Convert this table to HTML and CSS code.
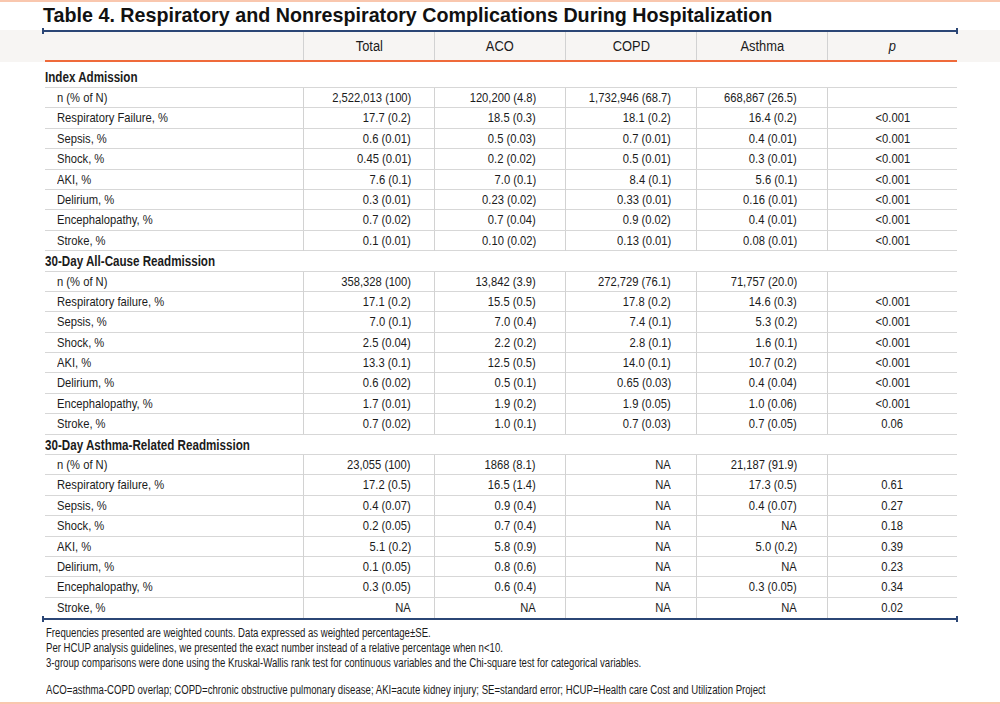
FILE: index.html
```html
<!DOCTYPE html>
<html lang="en">
<head>
<meta charset="utf-8">
<title>Table 4</title>
<link rel="stylesheet" href="styles.css">
</head>
<body>
<div class="page">
  <div class="edge"></div>
  <h1 class="title">Table 4. Respiratory and Nonrespiratory Complications During Hospitalization</h1>
  <div class="band">
    <div class="rule rule-top"></div>
    <div class="hrow">
      <div class="hc hl"></div>
      <div class="hc"><span>Total</span></div>
      <div class="hc"><span>ACO</span></div>
      <div class="hc"><span>COPD</span></div>
      <div class="hc"><span>Asthma</span></div>
      <div class="hc"><span><i>p</i></span></div>
    </div>
  </div>
  <div class="tbody">
    <div class="sec first"><span>Index Admission</span></div>
    <div class="row"><div class="lab"><span>n (% of N)</span></div><div class="c c1"><span>2,522,013 (100)</span></div><div class="c c2"><span>120,200 (4.8)</span></div><div class="c c3"><span>1,732,946 (68.7)</span></div><div class="c c4"><span>668,867 (26.5)</span></div><div class="c p"></div></div>
    <div class="row"><div class="lab"><span>Respiratory Failure, %</span></div><div class="c c1"><span>17.7 (0.2)</span></div><div class="c c2"><span>18.5 (0.3)</span></div><div class="c c3"><span>18.1 (0.2)</span></div><div class="c c4"><span>16.4 (0.2)</span></div><div class="c p"><span>&lt;0.001</span></div></div>
    <div class="row"><div class="lab"><span>Sepsis, %</span></div><div class="c c1"><span>0.6 (0.01)</span></div><div class="c c2"><span>0.5 (0.03)</span></div><div class="c c3"><span>0.7 (0.01)</span></div><div class="c c4"><span>0.4 (0.01)</span></div><div class="c p"><span>&lt;0.001</span></div></div>
    <div class="row"><div class="lab"><span>Shock, %</span></div><div class="c c1"><span>0.45 (0.01)</span></div><div class="c c2"><span>0.2 (0.02)</span></div><div class="c c3"><span>0.5 (0.01)</span></div><div class="c c4"><span>0.3 (0.01)</span></div><div class="c p"><span>&lt;0.001</span></div></div>
    <div class="row"><div class="lab"><span>AKI, %</span></div><div class="c c1"><span>7.6 (0.1)</span></div><div class="c c2"><span>7.0 (0.1)</span></div><div class="c c3"><span>8.4 (0.1)</span></div><div class="c c4"><span>5.6 (0.1)</span></div><div class="c p"><span>&lt;0.001</span></div></div>
    <div class="row"><div class="lab"><span>Delirium, %</span></div><div class="c c1"><span>0.3 (0.01)</span></div><div class="c c2"><span>0.23 (0.02)</span></div><div class="c c3"><span>0.33 (0.01)</span></div><div class="c c4"><span>0.16 (0.01)</span></div><div class="c p"><span>&lt;0.001</span></div></div>
    <div class="row"><div class="lab"><span>Encephalopathy, %</span></div><div class="c c1"><span>0.7 (0.02)</span></div><div class="c c2"><span>0.7 (0.04)</span></div><div class="c c3"><span>0.9 (0.02)</span></div><div class="c c4"><span>0.4 (0.01)</span></div><div class="c p"><span>&lt;0.001</span></div></div>
    <div class="row"><div class="lab"><span>Stroke, %</span></div><div class="c c1"><span>0.1 (0.01)</span></div><div class="c c2"><span>0.10 (0.02)</span></div><div class="c c3"><span>0.13 (0.01)</span></div><div class="c c4"><span>0.08 (0.01)</span></div><div class="c p"><span>&lt;0.001</span></div></div>

    <div class="sec"><span>30-Day All-Cause Readmission</span></div>
    <div class="row"><div class="lab"><span>n (% of N)</span></div><div class="c c1"><span>358,328 (100)</span></div><div class="c c2"><span>13,842 (3.9)</span></div><div class="c c3"><span>272,729 (76.1)</span></div><div class="c c4"><span>71,757 (20.0)</span></div><div class="c p"></div></div>
    <div class="row"><div class="lab"><span>Respiratory failure, %</span></div><div class="c c1"><span>17.1 (0.2)</span></div><div class="c c2"><span>15.5 (0.5)</span></div><div class="c c3"><span>17.8 (0.2)</span></div><div class="c c4"><span>14.6 (0.3)</span></div><div class="c p"><span>&lt;0.001</span></div></div>
    <div class="row"><div class="lab"><span>Sepsis, %</span></div><div class="c c1"><span>7.0 (0.1)</span></div><div class="c c2"><span>7.0 (0.4)</span></div><div class="c c3"><span>7.4 (0.1)</span></div><div class="c c4"><span>5.3 (0.2)</span></div><div class="c p"><span>&lt;0.001</span></div></div>
    <div class="row"><div class="lab"><span>Shock, %</span></div><div class="c c1"><span>2.5 (0.04)</span></div><div class="c c2"><span>2.2 (0.2)</span></div><div class="c c3"><span>2.8 (0.1)</span></div><div class="c c4"><span>1.6 (0.1)</span></div><div class="c p"><span>&lt;0.001</span></div></div>
    <div class="row"><div class="lab"><span>AKI, %</span></div><div class="c c1"><span>13.3 (0.1)</span></div><div class="c c2"><span>12.5 (0.5)</span></div><div class="c c3"><span>14.0 (0.1)</span></div><div class="c c4"><span>10.7 (0.2)</span></div><div class="c p"><span>&lt;0.001</span></div></div>
    <div class="row"><div class="lab"><span>Delirium, %</span></div><div class="c c1"><span>0.6 (0.02)</span></div><div class="c c2"><span>0.5 (0.1)</span></div><div class="c c3"><span>0.65 (0.03)</span></div><div class="c c4"><span>0.4 (0.04)</span></div><div class="c p"><span>&lt;0.001</span></div></div>
    <div class="row"><div class="lab"><span>Encephalopathy, %</span></div><div class="c c1"><span>1.7 (0.01)</span></div><div class="c c2"><span>1.9 (0.2)</span></div><div class="c c3"><span>1.9 (0.05)</span></div><div class="c c4"><span>1.0 (0.06)</span></div><div class="c p"><span>&lt;0.001</span></div></div>
    <div class="row"><div class="lab"><span>Stroke, %</span></div><div class="c c1"><span>0.7 (0.02)</span></div><div class="c c2"><span>1.0 (0.1)</span></div><div class="c c3"><span>0.7 (0.03)</span></div><div class="c c4"><span>0.7 (0.05)</span></div><div class="c p"><span>0.06</span></div></div>

    <div class="sec"><span>30-Day Asthma-Related Readmission</span></div>
    <div class="row"><div class="lab"><span>n (% of N)</span></div><div class="c c1"><span>23,055 (100)</span></div><div class="c c2"><span>1868 (8.1)</span></div><div class="c c3"><span>NA</span></div><div class="c c4"><span>21,187 (91.9)</span></div><div class="c p"></div></div>
    <div class="row"><div class="lab"><span>Respiratory failure, %</span></div><div class="c c1"><span>17.2 (0.5)</span></div><div class="c c2"><span>16.5 (1.4)</span></div><div class="c c3"><span>NA</span></div><div class="c c4"><span>17.3 (0.5)</span></div><div class="c p"><span>0.61</span></div></div>
    <div class="row"><div class="lab"><span>Sepsis, %</span></div><div class="c c1"><span>0.4 (0.07)</span></div><div class="c c2"><span>0.9 (0.4)</span></div><div class="c c3"><span>NA</span></div><div class="c c4"><span>0.4 (0.07)</span></div><div class="c p"><span>0.27</span></div></div>
    <div class="row"><div class="lab"><span>Shock, %</span></div><div class="c c1"><span>0.2 (0.05)</span></div><div class="c c2"><span>0.7 (0.4)</span></div><div class="c c3"><span>NA</span></div><div class="c c4"><span>NA</span></div><div class="c p"><span>0.18</span></div></div>
    <div class="row"><div class="lab"><span>AKI, %</span></div><div class="c c1"><span>5.1 (0.2)</span></div><div class="c c2"><span>5.8 (0.9)</span></div><div class="c c3"><span>NA</span></div><div class="c c4"><span>5.0 (0.2)</span></div><div class="c p"><span>0.39</span></div></div>
    <div class="row"><div class="lab"><span>Delirium, %</span></div><div class="c c1"><span>0.1 (0.05)</span></div><div class="c c2"><span>0.8 (0.6)</span></div><div class="c c3"><span>NA</span></div><div class="c c4"><span>NA</span></div><div class="c p"><span>0.23</span></div></div>
    <div class="row"><div class="lab"><span>Encephalopathy, %</span></div><div class="c c1"><span>0.3 (0.05)</span></div><div class="c c2"><span>0.6 (0.4)</span></div><div class="c c3"><span>NA</span></div><div class="c c4"><span>0.3 (0.05)</span></div><div class="c p"><span>0.34</span></div></div>
    <div class="row last"><div class="lab"><span>Stroke, %</span></div><div class="c c1"><span>NA</span></div><div class="c c2"><span>NA</span></div><div class="c c3"><span>NA</span></div><div class="c c4"><span>NA</span></div><div class="c p"><span>0.02</span></div></div>
  </div>
  <div class="rule rule-bottom"></div>
  <div class="notes">
    <p>Frequencies presented are weighted counts. Data expressed as weighted percentage±SE.</p>
    <p>Per HCUP analysis guidelines, we presented the exact number instead of a relative percentage when n&lt;10.</p>
    <p>3-group comparisons were done using the Kruskal-Wallis rank test for continuous variables and the Chi-square test for categorical variables.</p>
    <p class="gap">ACO=asthma-COPD overlap; COPD=chronic obstructive pulmonary disease; AKI=acute kidney injury; SE=standard error; HCUP=Health care Cost and Utilization Project</p>
  </div>
  <div class="grow"></div>
  <div class="edge"></div>
</div>
</body>
</html>
```

FILE: styles.css
```css
html, body {
  margin: 0;
  padding: 0;
  background: #ffffff;
}

.page {
  width: 1000px;
  height: 704px;
  display: flex;
  flex-direction: column;
  color: #1b1b1b;
  font-family: "Liberation Sans", Arial, sans-serif;
  overflow: hidden;
}

.edge {
  height: 2px;
  flex: none;
  background: #f9c7ae;
}

.grow {
  flex: 1;
}

.title {
  margin: 0 0 0 43px;
  height: 28px;
  flex: none;
  font-weight: bold;
  font-size: 19.7px;
  line-height: 27px;
  color: #111;
  white-space: nowrap;
}

.band {
  background: #f7f5f3;
  flex: none;
}

.rule {
  position: relative;
  height: 2px;
  margin: 0 42px;
  background: #2b4675;
  flex: none;
}

.rule::before,
.rule::after {
  content: "";
  position: absolute;
  top: -2px;
  width: 2px;
  height: 6px;
  background: #2b4675;
}

.rule::before { left: 0; }
.rule::after { right: 0; }

/* narrow type: the source uses a condensed face */
.hc span,
.sec span,
.lab span,
.c span {
  display: inline-block;
  transform: scaleX(0.83);
}

.hc span,
.c.p span {
  transform-origin: center;
}

.sec span,
.lab span {
  transform-origin: left center;
}

.c span {
  transform-origin: right center;
}

.hrow {
  display: grid;
  grid-template-columns: 258px 131px 131px 131px 131px 130px;
  margin: 0 43px 0 45px;
  height: 28px;
  border-bottom: 2px solid #ef6a3a;
}

.hc {
  font-size: 15.5px;
  line-height: 28px;
  text-align: center;
  border-left: 1px solid #d2d2d2;
}

.hc.hl {
  border-left: none;
}

.tbody {
  margin: 0 43px 0 45px;
  font-size: 13.5px;
}

.sec {
  height: 20.4px;
  box-sizing: border-box;
  border-bottom: 1px solid #d7d7d7;
  font-weight: bold;
  font-size: 14px;
  line-height: 20px;
}

.sec.first {
  height: 26px;
  padding-top: 5px;
}

.row {
  display: grid;
  grid-template-columns: 258px 131px 131px 131px 131px 130px;
  height: 20.4px;
  box-sizing: border-box;
  border-bottom: 1px solid #d7d7d7;
  line-height: 20px;
}

.row.last {
  border-bottom: none;
}

.lab {
  padding-left: 12px;
  white-space: nowrap;
}

.c {
  border-left: 1px solid #d2d2d2;
  text-align: right;
  white-space: nowrap;
}

.c1 { padding-right: 23px; }
.c2 { padding-right: 29px; }
.c3 { padding-right: 25px; }
.c4 { padding-right: 30px; }

.c.p {
  text-align: center;
  padding-right: 0;
}

.notes {
  margin: 6px 0 0 46px;
  font-size: 12px;
  line-height: 15px;
  white-space: nowrap;
  transform: scaleX(0.8);
  transform-origin: left top;
}

.notes p {
  margin: 0;
}

.notes p.gap {
  margin-top: 12px;
}
```
